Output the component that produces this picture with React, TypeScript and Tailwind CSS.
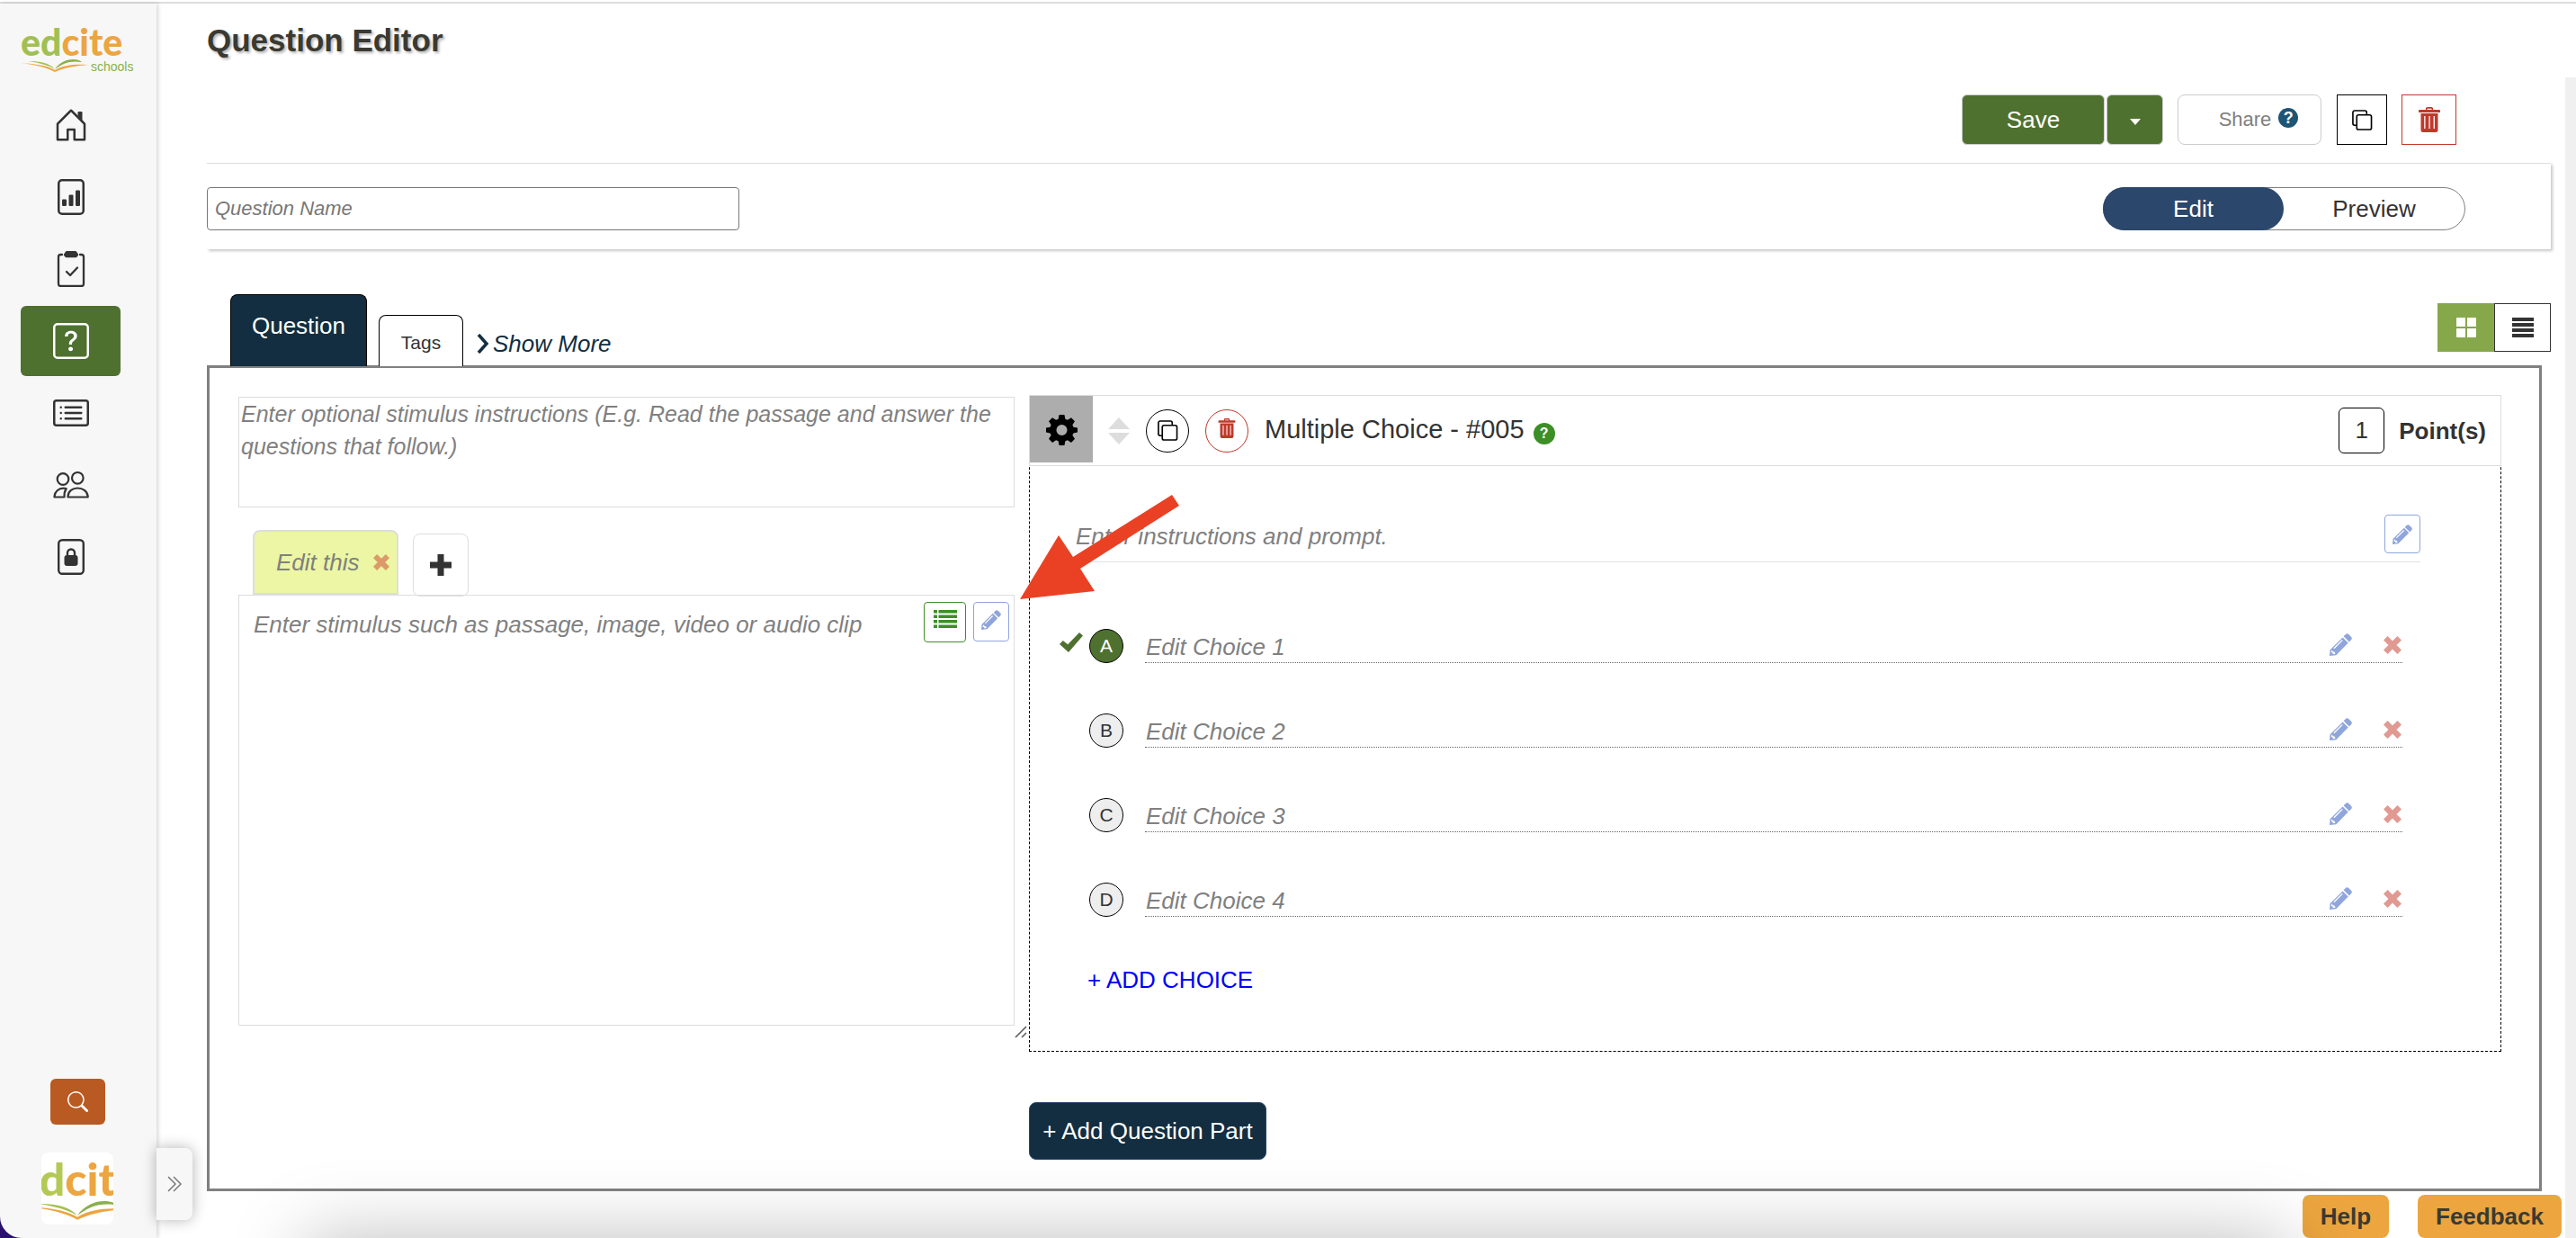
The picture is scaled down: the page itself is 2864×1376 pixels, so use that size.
import React, { useState } from 'react';
import { BsCardList, BsFileBarGraph, BsQuestionSquare, BsSearch } from 'react-icons/bs';

interface IconProps {
  className?: string;
}

const HouseIcon: React.FC<IconProps> = ({ className }) => (
  <svg viewBox="0 0 16 16" fill="currentColor" className={className} aria-hidden="true">
    <path d="M7.646 1.146a.5.5 0 0 1 .708 0l6 6a.5.5 0 0 1 .146.354v7a.5.5 0 0 1-.5.5H9.5a.5.5 0 0 1-.5-.5v-4H7v4a.5.5 0 0 1-.5.5H2a.5.5 0 0 1-.5-.5v-7a.5.5 0 0 1 .146-.354l6-6zM2.5 7.707V14H6v-4a.5.5 0 0 1 .5-.5h3a.5.5 0 0 1 .5.5v4h3.5V7.707L8 2.207l-5.5 5.5z" />
    <path d="M13 2.5V6l-2-2V2.5a.5.5 0 0 1 .5-.5h1a.5.5 0 0 1 .5.5z" />
  </svg>
);

const ClipboardIcon: React.FC<IconProps> = ({ className }) => (
  <svg viewBox="0 0 40 40" fill="none" stroke="currentColor" strokeWidth="2.3" strokeLinecap="round" strokeLinejoin="round" className={className} aria-hidden="true">
    <path d="M10 4H8.500a2.500 2.500 0 0 0-2.500 2.500v30A2.500 2.500 0 0 0 8.500 39h23a2.500 2.500 0 0 0 2.500-2.500v-30A2.500 2.500 0 0 0 31.500 4H30" />
    <path d="M15 23l4 4 8-8.500" />
    <path d="M15 1.200h10l2 3-1.500 1.800h-11L13 4.200z" fill="currentColor" />
  </svg>
);

const PeopleIcon: React.FC<IconProps> = ({ className }) => (
  <svg viewBox="0 0 40 40" fill="none" stroke="currentColor" strokeWidth="2.2" strokeLinejoin="round" className={className} aria-hidden="true">
    <circle cx="11" cy="13.500" r="6.300" />
    <circle cx="27.300" cy="12.300" r="6.300" />
    <path d="M16.500 33.500v-1c.5-5.500 5-9 10.800-9S38 27 38.700 32.500v1z" />
    <path d="M12.500 33.500H1.500v-1c.5-5 4.500-8.800 10-8.800 1.300 0 2.200.1 3.200.3-1.800 2.600-2.400 5.500-2.200 9.500z" />
  </svg>
);

const FileLockIcon: React.FC<IconProps> = ({ className }) => (
  <svg viewBox="0 0 40 40" fill="none" stroke="currentColor" strokeWidth="2.4" className={className} aria-hidden="true">
    <rect x="6.200" y="1.200" width="27.600" height="37.600" rx="4" />
    <rect x="12.500" y="18" width="15" height="12" rx="3" fill="currentColor" stroke="none" />
    <path d="M16 19v-3.500a4 4 0 0 1 8 0V19" />
  </svg>
);

const CopyIcon: React.FC<IconProps> = ({ className }) => (
  <svg viewBox="0 0 24 24" fill="none" stroke="currentColor" strokeWidth="1.7" className={className} aria-hidden="true">
    <rect x="6" y="6" width="17" height="17" rx="2" />
    <path d="M6 18H3.500a2 2 0 0 1-2-2V3a2 2 0 0 1 2-2h12a2 2 0 0 1 2 2v3" />
  </svg>
);

const TrashIcon: React.FC<IconProps> = ({ className }) => (
  <svg viewBox="0 0 24 28" fill="currentColor" className={className} aria-hidden="true">
    <path
      fillRule="evenodd"
      d="M8 3V1.500Q8 0 9.500 0h5Q16 0 16 1.500V3h7q1 0 1 1v2H0V4q0-1 1-1zm1.500 0h5V1.800h-5zM2.500 7h19v18.500Q21.500 28 19 28H5q-2.500 0-2.500-2.500zm3.700 3v14h1.300V10zm5.200 0v14h1.300V10zm5.200 0v14h1.300V10z"
    />
  </svg>
);

const PencilIcon: React.FC<IconProps> = ({ className }) => (
  <svg viewBox="0 0 24 24" fill="currentColor" className={className} aria-hidden="true">
    <path d="M17 1.200q1.800-1.800 3.600 0l2.400 2.400q1.600 1.600 0 3.400l-2 2L15 3.200z" />
    <path
      fillRule="evenodd"
      d="M14 4.200L19.900 10 7 23.200 0 24l.6-6.600zM13.300 6.600L4.200 15.700l.9.9 9.100-9.100zM2.200 17.600l-.4 2.800 1.600.2.300 1.700 2.500-.4-.6-2-1.700-.5z"
    />
  </svg>
);

const CrossIcon: React.FC<IconProps> = ({ className }) => (
  <svg viewBox="0 0 20 20" stroke="currentColor" strokeWidth="6.5" className={className} aria-hidden="true">
    <path d="M2.300 2.300l15.400 15.400M17.700 2.300L2.300 17.700" />
  </svg>
);

const CheckIcon: React.FC<IconProps> = ({ className }) => (
  <svg viewBox="0 0 26 22" fill="currentColor" className={className} aria-hidden="true">
    <path d="M0 13l3.800-4 5.400 4.300L22 0l4 3.600L10 22z" />
  </svg>
);

const CogIcon: React.FC<IconProps> = ({ className }) => (
  <svg viewBox="0 0 36 36" fill="currentColor" className={className} aria-hidden="true">
    <path
      fillRule="evenodd"
      d="M15 1h6l1 4.800 2.600 1.100 4.200-2.600 4.100 4.200-2.700 4 1.100 2.700L36 16v5l-4.700 1-1.100 2.500 2.700 4.100-4.100 4.200-4.200-2.700L22 31.200 21 36h-6l-1-4.800-2.600-1.100-4.200 2.700-4.100-4.200 2.700-4.100L4.700 22 0 21v-5l4.700-.8 1.100-2.700-2.700-4 4.100-4.200 4.200 2.600L14 5.800zM18 12.300a6.200 6.200 0 1 0 0 12.400 6.200 6.200 0 0 0 0-12.400z"
    />
  </svg>
);

const ListIcon: React.FC<IconProps> = ({ className }) => (
  <svg viewBox="0 0 26 20" fill="currentColor" className={className} aria-hidden="true">
    <path d="M0 0h4v3.500H0zM5.500 0H26v3.500H5.500zM0 5.500h4V9H0zM5.500 5.500H26V9H5.500zM0 11h4v3.500H0zM5.500 11H26v3.500H5.500zM0 16.500h4V20H0zM5.500 16.500H26V20H5.500z" />
  </svg>
);

const Book: React.FC<IconProps> = ({ className }) => (
  <svg viewBox="0 0 76 14" className={className} aria-hidden="true">
    <path d="M9 2c13 0 23 2 29 9C30 6 21 4 9 2z" fill="#a0c053" />
    <path d="M38 11C43 3 52 0 58 0c5 0 8 1 10 3-13-2-21 1-30 8z" fill="#8ab04a" />
    <path d="M0 4c14 1 28 2 38 8 10-6 22-7 37-6-13 1-26 3-37 8C27 8 15 6 0 4z" fill="#eca53f" />
  </svg>
);

const EdciteLogo = () => (
  <a href="#home" aria-label="edcite schools" className="flex h-[54px] w-[130px] flex-col font-['Lato',sans-serif]">
    <span className="text-[41px] leading-[38px] font-black text-[#a0c053]">
      ed<span className="text-[#eca53f]">cite</span>
    </span>
    <span className="flex items-start">
      <Book className="w-[76px]" />
      <span className="ml-0.5 font-['Liberation_Sans',Arial,sans-serif] text-[14px] leading-4 text-[#8ab04a]">schools</span>
    </span>
  </a>
);

const NAV_ITEMS = [
  { label: 'Home', icon: HouseIcon },
  { label: 'Reports', icon: BsFileBarGraph },
  { label: 'Assignments', icon: ClipboardIcon },
  { label: 'Questions', icon: BsQuestionSquare, active: true },
  { label: 'Lists', icon: BsCardList },
  { label: 'Classes', icon: PeopleIcon },
  { label: 'Secure files', icon: FileLockIcon },
];

const Sidebar = () => (
  <aside className="relative z-20 flex w-[174px] shrink-0 flex-col rounded-bl-3xl bg-[#f7f7f7] pt-6 shadow-[2px_0_4px_rgba(0,0,0,0.15)]">
    <div className="pl-[23px]">
      <EdciteLogo />
    </div>
    <nav className="mt-[18px] flex flex-col gap-0.5 pl-[23px]">
      {NAV_ITEMS.map(({ label, icon: Icon, active }) => (
        <a
          key={label}
          href="#nav"
          aria-label={label}
          className={`flex h-[78px] w-[111px] items-center justify-center rounded-md ${active ? 'bg-[#4f7130] text-white' : 'text-[#333]'}`}
        >
          <Icon className="h-10 w-10" />
        </a>
      ))}
    </nav>
    <div className="mt-auto flex flex-col items-center pr-0.5 pb-[15px]">
      <button aria-label="Search" className="flex h-[51px] w-[61px] items-center justify-center rounded-md bg-[#b95a22] text-white">
        <BsSearch className="h-[23px] w-[23px]" />
      </button>
      <div className="mt-[31px] flex h-20 w-20 flex-col items-center overflow-hidden rounded-lg bg-white">
        <span className="mt-1 block font-['Lato',sans-serif] text-[50px] leading-[50px] font-black whitespace-nowrap text-[#b4c955]">
          d<span className="text-[#eca53f]">cit</span>
        </span>
        <Book className="w-[112px] max-w-none" />
      </div>
    </div>
    <button
      aria-label="Expand menu"
      className="absolute bottom-5 left-full flex h-20 w-10 items-center justify-center rounded-r-lg bg-[#f7f7f7] text-[#777] shadow-[0_0_16px_rgba(0,0,0,0.3)]"
    >
      <svg viewBox="0 0 16 18" className="h-[18px] w-4" fill="none" stroke="currentColor" strokeWidth="1.5" aria-hidden="true">
        <path d="M1 1l8 8-8 8M7 1l8 8-8 8" />
      </svg>
    </button>
  </aside>
);

const Toolbar = () => (
  <div className="mt-10 mr-[105px] flex h-14 justify-end">
    <button className="w-[159px] rounded-md border border-[#ccc] bg-[#4f7130] text-white">Save</button>
    <button aria-label="More save options" className="ml-0.5 flex w-[63px] items-center justify-center rounded-md border border-[#ccc] bg-[#4f7130] text-white">
      <svg viewBox="0 0 12 7" className="mt-1 w-3" fill="currentColor" aria-hidden="true">
        <path d="M0 0h12L6 7z" />
      </svg>
    </button>
    <button className="ml-4 flex w-[160px] items-center justify-center gap-2 rounded-lg border border-[#ccc] pl-5 text-[22px] text-[#808080]">
      Share
      <span className="mb-1 flex h-[22px] w-[22px] items-center justify-center rounded-full bg-[#1f5475] text-[18px] leading-none font-bold text-white">?</span>
    </button>
    <button aria-label="Duplicate question" className="ml-[17px] flex w-14 items-center justify-center border border-black text-black">
      <CopyIcon className="h-[23px] w-6" />
    </button>
    <button aria-label="Delete question" className="ml-4 flex w-[61px] items-center justify-center border border-[#c0392b] text-[#c0392b]">
      <TrashIcon className="h-7 w-6" />
    </button>
  </div>
);

const NameBar = () => (
  <div className="mt-5 flex items-start justify-between border-t border-[#ddd] pt-[26px] pr-[95px] pb-[21px] shadow-[2px_2px_3px_rgba(0,0,0,0.22)] [clip-path:inset(0_-10px_-10px_0)]">
    <input
      aria-label="Question Name"
      placeholder="Question Name"
      className="h-12 w-[592px] rounded-sm border border-[#777] px-2 text-[22px] italic placeholder:text-[#777]"
    />
    <div className="flex h-12 w-[403px] rounded-full border border-[#808080]">
      <button className="-my-px -ml-px w-[201px] rounded-full bg-[#2b476b] text-white">Edit</button>
      <button className="flex-1 rounded-full">Preview</button>
    </div>
  </div>
);

const TabBar = () => (
  <div className="relative flex h-[129px] items-end pl-[26px]">
    <button className="-mb-px h-20 w-[152px] rounded-t-lg border border-b-0 border-black bg-[#122e40] pb-3 text-white">Question</button>
    <button className="-mb-px ml-[13px] h-[57px] w-[94px] rounded-t-lg border border-b-0 border-black bg-white pt-1 text-[21px]">Tags</button>
    <a href="#more" className="mb-1.5 ml-[15px] flex items-center gap-1 text-[#122e40] italic">
      <svg viewBox="0 0 14 22" className="h-[22px] w-[14px]" fill="none" stroke="currentColor" strokeWidth="3.500" aria-hidden="true">
        <path d="M2 1l9 10-9 10" />
      </svg>
      Show More
    </a>
    <div className="mb-[15px] ml-auto flex">
      <button aria-label="Grid view" className="flex h-[54px] w-[63px] items-center justify-center bg-[#86a84b] text-white">
        <svg viewBox="0 0 22 22" className="h-[22px] w-[22px]" fill="currentColor" aria-hidden="true">
          <path d="M0 1q0-1 1-1h9v10H0zM12 0h9q1 0 1 1v9H12zM0 12h10v10H1q-1 0-1-1zM12 12h10v9q0 1-1 1h-9z" />
        </svg>
      </button>
      <button aria-label="List view" className="flex h-[54px] w-[63px] items-center justify-center border border-[#333]">
        <svg viewBox="0 0 24 22" className="h-[22px] w-6" fill="currentColor" aria-hidden="true">
          <path d="M0 0h24v4H0zM0 6h24v4H0zM0 12h24v4H0zM0 18h24v4H0z" />
        </svg>
      </button>
    </div>
  </div>
);

const StimulusColumn = () => (
  <div className="mt-0.5 flex min-w-0 flex-col">
    <textarea
      aria-label="Stimulus instructions"
      placeholder="Enter optional stimulus instructions (E.g. Read the passage and answer the questions that follow.)"
      className="block h-[123px] w-full resize-none border border-[#ddd] px-0.5 text-[25px] italic placeholder:text-[#808080]"
    />
    <div className="mt-[25px] flex items-end pl-4">
      <div className="flex h-[72px] w-[162px] items-center rounded-t-lg border-2 border-[#ddd] bg-[#ecf6a4] pr-2 pl-6 text-[#808080] italic">
        <span className="whitespace-nowrap">Edit this</span>
        <button aria-label="Remove stimulus" className="ml-auto text-[#dd9a69]">
          <CrossIcon className="h-[18px] w-[18px]" />
        </button>
      </div>
      <button aria-label="Add stimulus" className="-mb-0.5 ml-4 flex h-[70px] w-[62px] items-center justify-center rounded-lg border border-[#ddd]">
        <svg viewBox="0 0 24 24" className="h-6 w-6" stroke="currentColor" strokeWidth="7" aria-hidden="true">
          <path d="M12 0v24M0 12h24" />
        </svg>
      </button>
    </div>
    <div className="flex h-[479px] border border-[#ddd] pt-[7px] pr-[5px] pl-4">
      <textarea
        aria-label="Stimulus"
        placeholder="Enter stimulus such as passage, image, video or audio clip"
        className="min-w-0 flex-1 resize-none pt-[7px] italic placeholder:text-[#808080]"
      />
      <button aria-label="Stimulus list" className="flex h-[45px] w-[47px] justify-center rounded-sm border border-[#3c8f26] pt-2 text-[#3c8f26]">
        <ListIcon className="h-5 w-[26px]" />
      </button>
      <button aria-label="Edit stimulus" className="ml-2 flex h-11 w-10 items-center justify-center rounded-sm border border-[#8fa5dc] pb-1 text-[#8fa5dc]">
        <PencilIcon className="h-[22px] w-[22px]" />
      </button>
    </div>
    <svg viewBox="0 0 14 14" className="-mr-3.5 h-3.5 w-3.5 self-end" fill="none" stroke="#555" strokeWidth="1.500" aria-hidden="true">
      <path d="M1 13L13 1M8 13l5-5" />
    </svg>
  </div>
);

interface ChoiceProps {
  letter: string;
  index: number;
  correct: boolean;
  onSelect: () => void;
}

const Choice: React.FC<ChoiceProps> = ({ letter, index, correct, onSelect }) => (
  <li className="flex h-[94px] items-end pl-[33px]">
    <span className="mb-3 w-[26px] text-[#4f7130]">{correct && <CheckIcon className="h-[22px] w-[26px]" />}</span>
    <button
      aria-pressed={correct}
      onClick={onSelect}
      className={`ml-[7px] h-[38px] w-[38px] rounded-full border border-black pb-0.5 text-[21px] leading-none ${correct ? 'bg-[#4f7130] text-white' : 'bg-[#eee]'}`}
    >
      {letter}
    </button>
    <div className="ml-6 flex h-10 flex-1 items-center border-b border-dotted border-[#666]">
      <input
        aria-label={`Choice ${letter}`}
        placeholder={`Edit Choice ${index}`}
        className="mt-1 min-w-0 flex-1 pl-px italic placeholder:text-[#808080]"
      />
      <button aria-label={`Edit choice ${letter}`} className="text-[#8fa5dc]">
        <PencilIcon className="h-[25px] w-[25px]" />
      </button>
      <button aria-label={`Remove choice ${letter}`} className="mr-px ml-[35px] text-[#e09a91]">
        <CrossIcon className="h-5 w-5" />
      </button>
    </div>
  </li>
);

const QuestionCard = () => {
  const [correct, setCorrect] = useState('A');

  return (
    <section className="border border-dashed border-black">
      <header className="-mx-px -mt-px flex h-[79px] border border-[#ddd] pr-4">
        <button aria-label="Question settings" className="flex h-[74px] w-[70px] items-center justify-center bg-[#adadad] text-black">
          <CogIcon className="h-[35px] w-[35px]" />
        </button>
        <div className="flex flex-1 items-center">
          <svg viewBox="0 0 24 30" className="ml-[17px] w-6" fill="#ddd" aria-hidden="true">
            <path d="M12 0l12 13H0zM12 30L0 17h24z" />
          </svg>
          <button aria-label="Duplicate part" className="ml-[18px] flex h-12 w-12 items-center justify-center rounded-full border border-black text-black">
            <CopyIcon className="h-[23px] w-6" />
          </button>
          <button aria-label="Delete part" className="ml-[18px] flex h-12 w-12 items-center justify-center rounded-full border border-[#c0392b] pb-1.5 text-[#c0392b]">
            <TrashIcon className="h-[22px] w-5" />
          </button>
          <h2 className="ml-[18px] pb-[3px] text-[29px]">Multiple Choice - #005</h2>
          <button aria-label="Help on multiple choice" className="mt-1.5 ml-2.5 h-6 w-6 rounded-full bg-[#3c8f26] text-[16px] leading-none font-bold text-white">
            ?
          </button>
          <label className="ml-auto flex items-center gap-4 font-bold">
            <input defaultValue="1" className="h-[51px] w-[51px] rounded-md border border-black text-center font-normal" />
            Point(s)
          </label>
        </div>
      </header>

      <div className="mr-[89px] ml-[49px] flex border-b border-[#e2e2e2] pt-[54px] pb-[9px]">
        <input
          aria-label="Instructions and prompt"
          placeholder="Enter instructions and prompt."
          className="mt-1 min-w-0 flex-1 pl-0.5 italic placeholder:text-[#808080]"
        />
        <button aria-label="Edit prompt" className="flex h-[43px] w-10 items-center justify-center rounded-sm border border-[#8fa5dc] text-[#8fa5dc]">
          <PencilIcon className="h-[22px] w-[22px]" />
        </button>
      </div>

      <ul className="mt-[18px] mr-[109px]">
        {['A', 'B', 'C', 'D'].map((letter, i) => (
          <Choice key={letter} letter={letter} index={i + 1} correct={correct === letter} onSelect={() => setCorrect(letter)} />
        ))}
      </ul>

      <button className="mt-[52px] mb-[61px] ml-16 block text-[#0000f5]">+ ADD CHOICE</button>
    </section>
  );
};

// Callout pointing at the stimulus edit button
const Callout = () => (
  <svg viewBox="0 0 178 118" className="pointer-events-none absolute top-[110px] -left-2.5 z-10 w-[178px]" aria-hidden="true">
    <path d="M0 117L43 46l16 24L169 1l8 12L67 83l16 25z" fill="#ea4125" />
  </svg>
);

export default function App() {
  return (
    <div className="relative flex min-h-screen flex-col overflow-hidden bg-white font-['Liberation_Sans',Arial,sans-serif] text-[26px] leading-9 text-[#333]">
      <div className="h-1 border-b-2 border-[#ddd]" />
      <div className="flex flex-1 bg-[linear-gradient(#2b1070,#2b1070)] bg-[length:40px_40px] bg-bottom-left bg-no-repeat">
        <Sidebar />
        <main className="min-w-0 flex-1 pr-4 pb-12 pl-14">
          <h1 className="pt-[21px] text-[35px] leading-10 font-bold text-[#3a3a32] [text-shadow:2px_2px_3px_rgba(0,0,0,0.3)]">Question Editor</h1>
          <Toolbar />
          <NameBar />
          <TabBar />
          <div className="mr-2.5 grid grid-cols-[863fr_1637fr] gap-4 border-3 border-[#808080] pt-[30px] pr-[42px] pb-8 pl-8">
            <StimulusColumn />
            <div className="relative min-w-0">
              <QuestionCard />
              <Callout />
              <button className="mt-14 h-16 w-[264px] rounded-lg border border-[#2b476b] bg-[#122e40] whitespace-nowrap text-white">+ Add Question Part</button>
            </div>
          </div>
        </main>
        <div className="mt-[82px] w-3 bg-[#f0f0f0]" />
      </div>

      <div className="absolute right-4 bottom-0 flex gap-8">
        <button className="h-12 w-24 rounded-lg bg-[#eca53f] font-bold text-[#3a3a32]">Help</button>
        <button className="h-12 w-40 rounded-lg bg-[#eca53f] font-bold text-[#3a3a32]">Feedback</button>
      </div>
      <div className="pointer-events-none absolute top-full right-[320px] left-[340px] z-10 h-40 shadow-[0_0_84px_rgba(0,0,0,0.26)]" />
    </div>
  );
}
